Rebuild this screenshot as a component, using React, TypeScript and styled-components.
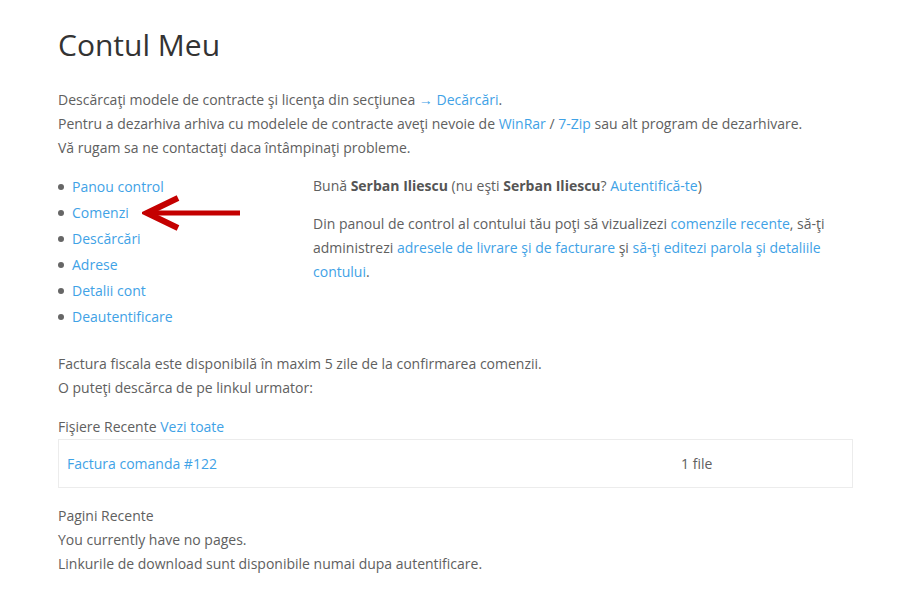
import React from "react";
import styled, { createGlobalStyle } from "styled-components";

const Global = createGlobalStyle`
  html, body { margin: 0; padding: 0; background: #fff; }
  body {
    font-family: "Open Sans", "Liberation Sans", sans-serif;
    font-size: 14px;
    color: #606060;
  }
  * { box-sizing: border-box; }
`;

const Page = styled.div`
  width: 912px;
  padding: 27px 59px 20px 58px;
`;

const Title = styled.h1`
  margin: 0 0 25px;
  font-size: 30px;
  line-height: 36px;
  font-weight: 400;
  color: #333;
`;

const Para = styled.p<{ $mb?: number }>`
  margin: 0 0 ${(p) => p.$mb ?? 0}px;
  line-height: 24px;
`;

const Link = styled.a`
  color: #3fa2e6;
  text-decoration: none;
`;

const Columns = styled.div`
  display: grid;
  grid-template-columns: 255px 1fr;
  margin-bottom: 23px;
`;

const Nav = styled.ul`
  position: relative;
  list-style: none;
  margin: 0;
  padding: 0;
`;

const NavItem = styled.li`
  display: flex;
  align-items: center;
  height: 26px;
  &::before {
    content: "";
    width: 6px;
    height: 6px;
    border-radius: 50%;
    background: #666;
    margin: 1px 8px 0 0;
  }
`;

const Arrow = styled.svg`
  position: absolute;
  left: 84px;
  top: 22px;
`;

const Side = styled.div`
  padding-top: 1px;
`;

const Strong = styled.b`
  font-weight: 700;
  color: #555;
`;

const FileBox = styled.div`
  display: grid;
  grid-template-columns: 614px 1fr;
  align-items: center;
  height: 49px;
  border: 1px solid #ececec;
  padding: 0 8px;
  margin-bottom: 16px;
`;

const Count = styled.span`
  color: #606060;
`;

export default function App() {
  return (
    <Page>
      <Global />
      <Title>Contul Meu</Title>
      <Para>
        Descărcaţi modele de contracte şi licenţa din secţiunea{" "}
        <Link href="#">→ Decărcări</Link>.
      </Para>
      <Para>
        Pentru a dezarhiva arhiva cu modelele de contracte aveţi nevoie de{" "}
        <Link href="#">WinRar</Link> / <Link href="#">7-Zip</Link> sau alt program de dezarhivare.
      </Para>
      <Para $mb={13}>Vă rugam sa ne contactaţi daca întâmpinaţi probleme.</Para>

      <Columns>
        <Nav>
          {["Panou control", "Comenzi", "Descărcări", "Adrese", "Detalii cont", "Deautentificare"].map(
            (t) => (
              <NavItem key={t}>
                <Link href="#">{t}</Link>
              </NavItem>
            )
          )}
          <Arrow width="100" height="36" viewBox="0 0 100 36">
            <line x1="8" y1="18" x2="98" y2="18" stroke="#c40000" strokeWidth="5" />
            <polyline
              points="36,3 5,18 36,33"
              fill="none"
              stroke="#c40000"
              strokeWidth="6"
              strokeLinejoin="miter"
            />
          </Arrow>
        </Nav>
        <Side>
          <Para $mb={14}>
            Bună <Strong>Serban Iliescu</Strong> (nu eşti <Strong>Serban Iliescu</Strong>?{" "}
            <Link href="#">Autentifică-te</Link>)
          </Para>
          <Para>
            Din panoul de control al contului tău poţi să vizualizezi{" "}
            <Link href="#">comenzile recente</Link>, să-ţi administrezi{" "}
            <Link href="#">adresele de livrare şi de facturare</Link> şi{" "}
            <Link href="#">să-ţi editezi parola şi detaliile contului</Link>.
          </Para>
        </Side>
      </Columns>

      <Para>Factura fiscala este disponibilă în maxim 5 zile de la confirmarea comenzii.</Para>
      <Para $mb={15}>O puteţi descărca de pe linkul urmator:</Para>
      <Para>
        Fişiere Recente <Link href="#">Vezi toate</Link>
      </Para>
      <FileBox>
        <Link href="#">Factura comanda #122</Link>
        <Count>1 file</Count>
      </FileBox>
      <Para>Pagini Recente</Para>
      <Para>You currently have no pages.</Para>
      <Para>Linkurile de download sunt disponibile numai dupa autentificare.</Para>
    </Page>
  );
}
